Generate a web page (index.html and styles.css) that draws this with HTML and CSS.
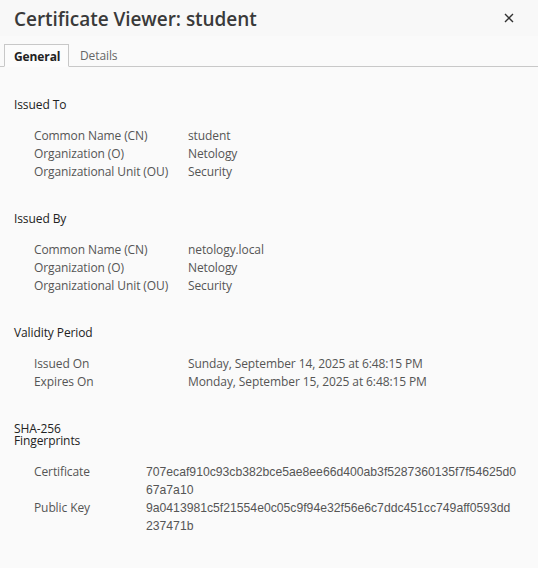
FILE: index.html
```html
<!DOCTYPE html>
<html lang="en">
<head>
<meta charset="utf-8">
<title>Certificate Viewer: student</title>
<link rel="stylesheet" href="styles.css">
</head>
<body>
<div class="dialog">
  <header class="titlebar">
    <h1 class="title">Certificate Viewer: student</h1>
    <button class="close" aria-label="Close">
      <svg width="10" height="10" viewBox="0 0 10 10"><path d="M1 1L9 9M9 1L1 9" stroke="#333" stroke-width="1.4" fill="none"/></svg>
    </button>
  </header>
  <nav class="tabs">
    <div class="tab active">General</div>
    <div class="tab">Details</div>
  </nav>
  <main class="content">
    <section class="section">
      <h2 class="heading">Issued To</h2>
      <div class="rows">
        <div class="label">Common Name (CN)</div><div class="value">student</div>
        <div class="label">Organization (O)</div><div class="value">Netology</div>
        <div class="label">Organizational Unit (OU)</div><div class="value">Security</div>
      </div>
    </section>
    <section class="section">
      <h2 class="heading">Issued By</h2>
      <div class="rows">
        <div class="label">Common Name (CN)</div><div class="value">netology.local</div>
        <div class="label">Organization (O)</div><div class="value">Netology</div>
        <div class="label">Organizational Unit (OU)</div><div class="value">Security</div>
      </div>
    </section>
    <section class="section">
      <h2 class="heading">Validity Period</h2>
      <div class="rows">
        <div class="label">Issued On</div><div class="value">Sunday, September 14, 2025 at 6:48:15 PM</div>
        <div class="label">Expires On</div><div class="value">Monday, September 15, 2025 at 6:48:15 PM</div>
      </div>
    </section>
    <section class="section">
      <h2 class="heading narrow">SHA-256 Fingerprints</h2>
      <div class="rows fp">
        <div class="label">Certificate</div><div class="value hash">707ecaf910c93cb382bce5ae8ee66d400ab3f5287360135f7f54625d067a7a10</div>
        <div class="label">Public Key</div><div class="value hash">9a0413981c5f21554e0c05c9f94e32f56e6c7ddc451cc749aff0593dd237471b</div>
      </div>
    </section>
  </main>
</div>
</body>
</html>
```
FILE: styles.css
```css
* { box-sizing: border-box; }
html, body { margin: 0; padding: 0; }
body {
  background: #fafafa;
  font-family: "Open Sans", "Noto Sans", sans-serif;
  color: #222;
  width: 538px;
  height: 568px;
  overflow: hidden;
}
.dialog { display: flex; flex-direction: column; }
.titlebar {
  height: 36px;
  display: flex;
  align-items: center;
  justify-content: space-between;
  padding: 0 24px 0 14px;
  background: #f8f8f8;
}
.title {
  margin: 1px 0 0;
  font-size: 19px;
  font-weight: 600;
  color: #3a3a3a;
  letter-spacing: -0.05px;
}
.close {
  border: 0;
  background: transparent;
  padding: 0;
  width: 10px;
  height: 10px;
  display: flex;
}
.tabs {
  margin-top: 8px;
  display: flex;
  align-items: flex-end;
  padding-left: 4px;
  border-bottom: 1px solid #c8c8c8;
  height: 23px;
}
.tab {
  height: 23px;
  line-height: 24px;
  font-size: 12px;
  color: #666;
  padding: 0 11px;
  margin-bottom: -1px;
  letter-spacing: -0.1px;
}
.tab.active {
  color: #222;
  font-weight: 700;
  background: #fcfcfc;
  border: 1px solid #c8c8c8;
  border-bottom-color: #fcfcfc;
  padding: 0 9px;
  width: 65px;
}
.content {
  padding: 32px 14px 0;
  display: flex;
  flex-direction: column;
  gap: 32px;
}
.section { display: flex; flex-direction: column; gap: 16px; }
.heading {
  margin: 0;
  font-size: 12px;
  font-weight: 400;
  line-height: 12px;
  color: #222;
  letter-spacing: -0.1px;
}
.heading.narrow { width: 80px; }
.rows {
  display: grid;
  grid-template-columns: 154px 1fr;
  padding-left: 20px;
  font-size: 12px;
  line-height: 18px;
  color: #555;
  letter-spacing: -0.1px;
}
.rows.fp { grid-template-columns: 112px 371px; }
.hash {
  word-break: break-all;
  font-family: "Liberation Sans", Arial, sans-serif;
  font-size: 12.2px;
  letter-spacing: 0;
}
```
